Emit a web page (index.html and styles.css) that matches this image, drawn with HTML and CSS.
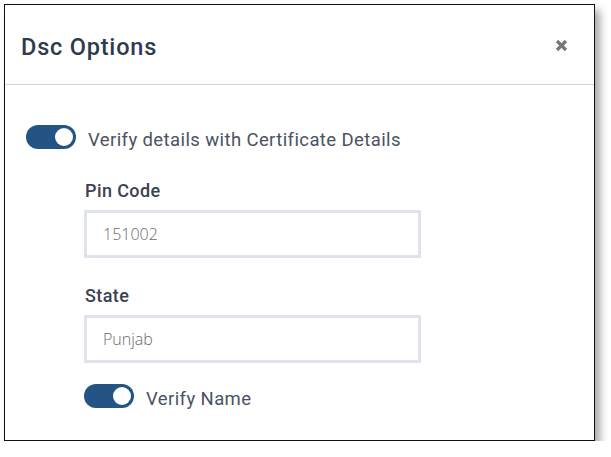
FILE: index.html
```html
<!DOCTYPE html>
<html>
<head>
<meta charset="utf-8">
<link rel="stylesheet" href="styles.css">
</head>
<body>
<div class="modal">
  <div class="header">
    <h1 class="title">Dsc Options</h1>
    <svg class="close" width="13" height="13" viewBox="0 0 13 13"><path d="M2 2 L11 11 M11 2 L2 11" stroke="#777" stroke-width="3.2" stroke-linecap="butt"/></svg>
  </div>
  <div class="body">
    <div class="toggle-row">
      <span class="toggle"><span class="knob"></span></span>
      <span class="toggle-label">Verify details with Certificate Details</span>
    </div>
    <div class="fields">
      <label class="field-label">Pin Code</label>
      <div class="input">151002</div>
      <label class="field-label state">State</label>
      <div class="input">Punjab</div>
      <div class="toggle-row small">
        <span class="toggle"><span class="knob"></span></span>
        <span class="toggle-label">Verify Name</span>
      </div>
    </div>
  </div>
</div>
</body>
</html>
```
FILE: styles.css
```css
html, body {
  margin: 0;
  padding: 0;
  background: #fff;
}
body {
  padding: 4px 0 0 4px;
  font-family: Roboto, "Liberation Sans", sans-serif;
}
.modal {
  width: 589px;
  height: 435px;
  border: 1px solid #111;
  background: #fff;
  box-shadow: 5px 6px 8px rgba(0,0,0,0.35);
  box-sizing: content-box;
}
.header {
  height: 80px;
  border-bottom: 1px solid #d4d4d4;
  display: flex;
  align-items: center;
  justify-content: space-between;
  padding: 4px 26px 0 16px;
  box-sizing: border-box;
}
.title {
  margin: 0;
  font-size: 23.5px;
  font-weight: 500;
  color: #2e3b4e;
  letter-spacing: 0.8px;
}
.close {
  display: block;
  margin-top: -2px;
}
.body {
  padding: 40px 0 0 21px;
}
.toggle-row {
  display: flex;
  align-items: center;
  gap: 12px;
}
.toggle {
  width: 50px;
  height: 24px;
  border-radius: 12px;
  background: #235484;
  display: flex;
  align-items: center;
  justify-content: flex-end;
  padding-right: 3px;
  box-sizing: border-box;
  flex: none;
}
.knob {
  width: 18px;
  height: 18px;
  border-radius: 50%;
  background: #fff;
}
.toggle-label {
  font-size: 18.5px;
  line-height: 22px;
  letter-spacing: 0.4px;
  color: #4a5264;
  padding-top: 3px;
  margin-bottom: -3px;
}
.fields {
  padding-left: 58px;
  padding-top: 31px;
  display: flex;
  flex-direction: column;
}
.field-label {
  font-size: 18px;
  font-weight: 500;
  letter-spacing: 0.4px;
  color: #3a4252;
  padding-left: 1px;
  height: 22px;
  line-height: 22px;
}
.field-label.state {
  margin-top: 27px;
}
.input {
  margin-top: 8px;
  width: 337px;
  height: 48px;
  box-sizing: border-box;
  border: 3px solid #dfe3ee;
  padding-left: 16px;
  display: flex;
  align-items: center;
  font-family: "Open Sans", sans-serif;
  font-weight: 300;
  font-size: 16px;
  color: #6a6a6a;
}
.toggle-row.small {
  margin-top: 21px;
}
```
